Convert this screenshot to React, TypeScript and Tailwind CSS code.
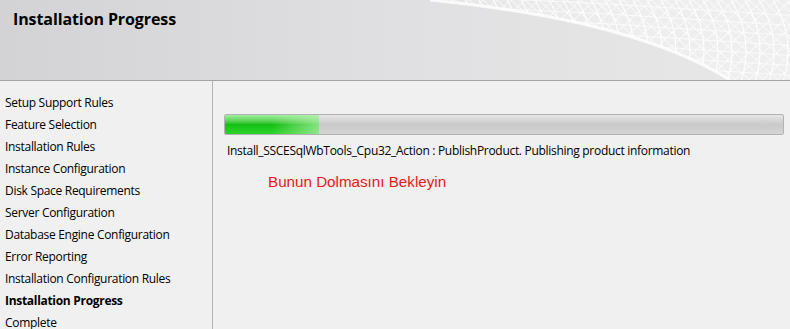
import React from "react";

const steps = [
  "Setup Support Rules",
  "Feature Selection",
  "Installation Rules",
  "Instance Configuration",
  "Disk Space Requirements",
  "Server Configuration",
  "Database Engine Configuration",
  "Error Reporting",
  "Installation Configuration Rules",
  "Installation Progress",
  "Complete",
];

function Mesh() {
  const lines: React.ReactElement[] = [];
  for (let i = 0; i < 30; i++) {
    const x = 420 + i * 14;
    lines.push(<path key={"a" + i} d={`M${x} -5 Q ${x + 30} 40 ${x + 10} 90`} stroke="white" strokeWidth="1.2" fill="none" />);
    lines.push(<path key={"b" + i} d={`M${x - 60} 90 L ${x + 40} -5`} stroke="white" strokeWidth="0.9" fill="none" />);
    lines.push(<path key={"c" + i} d={`M${x - 40} -5 L ${x + 60} 90`} stroke="white" strokeWidth="0.9" fill="none" />);
  }
  for (let j = 0; j < 8; j++) {
    const y = 2 + j * 10;
    lines.push(<path key={"h" + j} d={`M400 ${y - 8} Q 600 ${y} 800 ${y + 14}`} stroke="white" strokeWidth="0.8" fill="none" />);
  }
  return (
    <svg className="absolute inset-0" width="790" height="80" viewBox="0 0 790 80">
      <defs>
        <clipPath id="sw">
          <path d="M430 0 C 530 10 650 30 730 80 L 790 80 L 790 0 Z" />
        </clipPath>
        <linearGradient id="fade" x1="0" x2="1" y1="0" y2="0">
          <stop offset="0" stopColor="white" stopOpacity="0.3" />
          <stop offset="0.5" stopColor="white" stopOpacity="0.6" />
          <stop offset="1" stopColor="white" stopOpacity="0.5" />
        </linearGradient>
      </defs>
      <path d="M430 0 C 530 10 650 30 730 80 L 790 80 L 790 0 Z" fill="url(#fade)" opacity="0.6" />
      <g clipPath="url(#sw)" opacity="0.9">{lines}</g>
      <path d="M430 0 C 530 10 650 30 730 80" stroke="white" strokeWidth="3" fill="none" opacity="0.8" />
    </svg>
  );
}

export default function App() {
  return (
    <div
      className="w-[790px] h-[329px] overflow-hidden flex flex-col bg-[#f0f0f0] text-black"
      style={{ fontFamily: "'Open Sans', 'Noto Sans', sans-serif" }}
    >
      <div className="relative h-[81px] shrink-0 bg-gradient-to-r from-[#d3d3d5] via-[#e0e0e2] to-[#e8e8e8] border-b border-[#a4a4a4]">
        <Mesh />
        <div className="relative pl-[13px] pt-[7px] text-[16px] font-bold tracking-[-0.1px]">
          Installation Progress
        </div>
      </div>
      <div className="flex flex-1">
        <div className="w-[213px] shrink-0 border-r border-[#b4b4b4] bg-[#f0f0f0] pt-[11px] pl-[5px]">
          {steps.map((s) => (
            <div
              key={s}
              className={`h-[22px] leading-[22px] text-[12px] tracking-[-0.3px] whitespace-nowrap ${
                s === "Installation Progress" ? "font-bold" : ""
              }`}
            >
              {s}
            </div>
          ))}
        </div>
        <div className="flex-1 pl-[11px] pr-[6px] pt-[33px]">
          <div className="relative h-[21px] rounded-[2px] border border-[#b2b2b2] bg-gradient-to-b from-[#e6e6e6] via-[#cacaca] to-[#d4d4d4] overflow-hidden">
            <div className="absolute left-0 top-0 bottom-0 w-[94px] bg-gradient-to-b from-[#9ff09c] via-[#12c012] to-[#2fd22c]">
              <div className="absolute inset-0 bg-gradient-to-r from-transparent via-transparent to-[#b8f0b0]/70" />
            </div>
          </div>
          <div className="mt-[7px] pl-[3px] text-[12px] tracking-[-0.3px] whitespace-nowrap">
            Install_SSCESqlWbTools_Cpu32_Action : PublishProduct. Publishing product information
          </div>
          <div
            className="mt-[11px] pl-[44px] text-[15.2px] text-[#e31b1b]"
            style={{ fontFamily: "'Liberation Sans', Arial, sans-serif" }}
          >
            Bunun Dolmasını Bekleyin
          </div>
        </div>
      </div>
    </div>
  );
}
